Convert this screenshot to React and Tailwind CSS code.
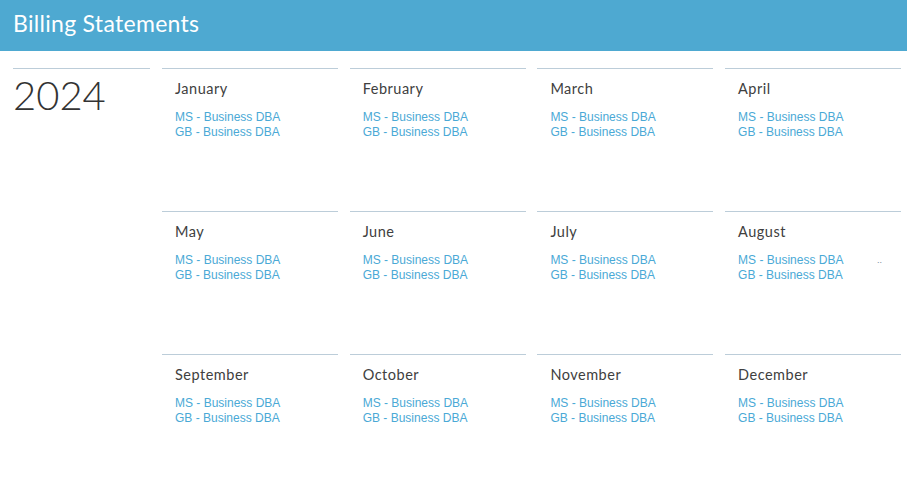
const months = [
  'January', 'February', 'March', 'April',
  'May', 'June', 'July', 'August',
  'September', 'October', 'November', 'December',
];

function MonthCell({ name }) {
  return (
    <div className="h-[143px] border-t border-[#bccdd9] pl-[13px] pr-[13px]">
      <div className="mt-[10px] text-[14.5px] leading-[20px] text-[#404040] tracking-[0.5px]" style={{ fontFamily: 'Lato, "Noto Sans", sans-serif' }}>
        {name}
      </div>
      <div className="mt-[11px] text-[12px] leading-[15px] text-[#4aa9d6]" style={{ fontFamily: '"Liberation Sans", Arial, sans-serif' }}>
        <div className="flex items-center">
          <a href="#" className="hover:underline">MS - Business DBA</a>
          {name === 'August' && <span className="ml-auto mr-[6px] text-[9px] text-[#7a8a99]">..</span>}
        </div>
        <div>
          <a href="#" className="hover:underline">GB - Business DBA</a>
        </div>
      </div>
    </div>
  );
}

export default function App() {
  return (
    <div className="min-h-[489px] w-[907px] bg-white">
      {/* Header */}
      <div className="flex h-[51px] items-center bg-[#4ea9d1] px-[13px] pb-[5px]">
        <h1 className="text-[23px] font-normal leading-[28px] text-white tracking-[0.3px]" style={{ fontFamily: 'Lato, "Noto Sans", sans-serif' }}>
          Billing Statements
        </h1>
      </div>

      {/* Body */}
      <div className="flex pl-[13px] pt-[17px]">
        <div className="w-[137px] shrink-0 border-t border-[#bccdd9]">
          <div className="mt-[2px] text-[40px] font-light leading-[48px] text-[#333]" style={{ fontFamily: 'Lato, "Noto Sans", sans-serif' }}>
            2024
          </div>
        </div>
        <div className="ml-[12px] grid grid-cols-[176px_176px_176px_176px] gap-x-[11.7px]">
          {months.map((m) => (
            <MonthCell key={m} name={m} />
          ))}
        </div>
      </div>
    </div>
  );
}
